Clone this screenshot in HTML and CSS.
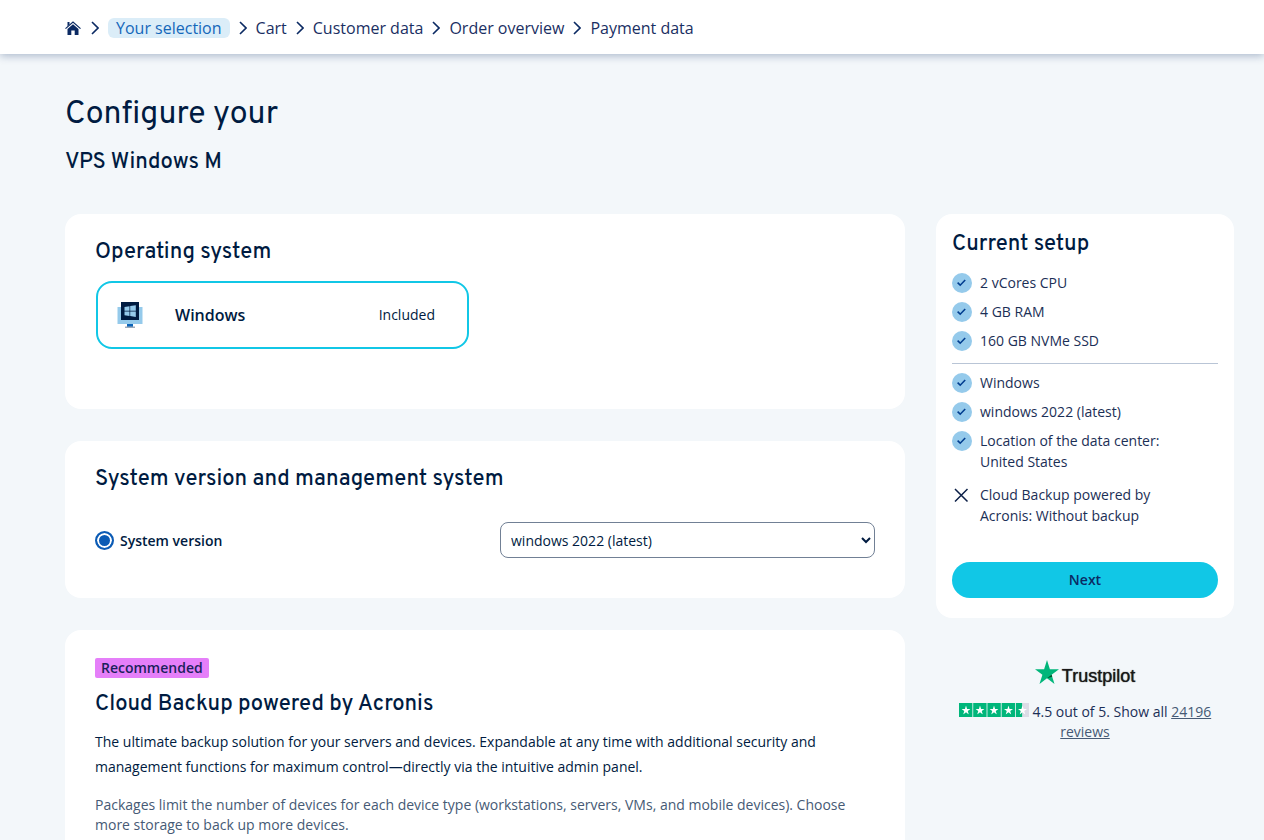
FILE: index.html
```html
<!doctype html>
<html lang="en">
<head>
<meta charset="utf-8">
<meta name="viewport" content="width=device-width, initial-scale=1">
<title>Configure your VPS Windows M</title>
<link rel="stylesheet" href="styles.css">
</head>

<body>

<!-- icons used more than once -->
<svg class="sprite" aria-hidden="true">
	<symbol id="chevron" viewBox="0 0 8 14"><path d="M1 1l6 6-6 6" fill="none" stroke="#0b2a63" stroke-width="1.6"/></symbol>
	<symbol id="check" viewBox="0 0 20 20"><circle cx="10" cy="10" r="10" fill="#95caeb"/><path d="M5.6 9.700l2.600 2.500 5-5.200" fill="none" stroke="#003d8f" stroke-width="1.6"/></symbol>
	<symbol id="star" viewBox="0 0 24 24"><path d="M12 0l2.9 9.2H24l-7.4 5.6 2.9 9.2-7.5-5.7L4.500 24l2.900-9.200L0 9.200h9.100z"/></symbol>
</svg>

<header class="topbar">
	<nav class="breadcrumb" aria-label="Order steps">
		<a class="home" href="#" aria-label="Home">
			<svg width="16" height="14" viewBox="0 0 16 14" fill="#0b2a63"><path d="M8 3.200l5.500 4.800v6H9.700V9.500H6.300V14H2.500V8z"/><path d="M.5 7.600L8 1l7.500 6.600" fill="none" stroke="#0b2a63" stroke-width="1.2"/><path d="M2.500 1h2v2.500l-2 1.800z"/></svg>
		</a>
		<svg class="chevron"><use href="#chevron"/></svg>
		<a class="current" href="#" aria-current="step">Your selection</a>
		<svg class="chevron"><use href="#chevron"/></svg>
		<a href="#">Cart</a>
		<svg class="chevron"><use href="#chevron"/></svg>
		<a href="#">Customer data</a>
		<svg class="chevron"><use href="#chevron"/></svg>
		<a href="#">Order overview</a>
		<svg class="chevron"><use href="#chevron"/></svg>
		<a href="#">Payment data</a>
	</nav>
</header>

<div class="page">
	<h1>Configure your</h1>
	<h2 class="product">VPS Windows M</h2>

	<div class="columns">
		<main class="options">
			<section class="card card-os">
				<h2>Operating system</h2>
				<button type="button" class="os">
					<svg width="26" height="26" viewBox="0 0 26 26">
						<path fill="#95caeb" d="M.5 5h25v17H.5z"/>
						<path fill="#0b64b8" d="M10 22h6v3h-6z"/>
						<path fill="#9aa9ba" d="M8 24.500h10V26H8z"/>
						<path fill="#001b41" d="M4 0h18v18H4z"/>
						<path fill="#95caeb" d="M7.500 5l5-.8v4.500h-5zM13.200 4.100l5.600-.8v5.400h-5.600zM7.500 9.400h5v4.600l-5-.8zM13.200 9.400h5.600v5.500l-5.600-.8z"/>
					</svg>
					<span class="os-name">Windows</span>
					<span class="os-price">Included</span>
				</button>
			</section>

			<section class="card card-version">
				<h2>System version and management system</h2>
				<div class="version">
					<label class="radio"><input type="radio" name="system" checked>System version</label>
					<select aria-label="System version">
						<option>windows 2022 (latest)</option>
					</select>
				</div>
			</section>

			<section class="card card-backup">
				<span class="badge">Recommended</span>
				<h2>Cloud Backup powered by Acronis</h2>
				<p class="lead">The ultimate backup solution for your servers and devices. Expandable at any time with additional security and management functions for maximum control—directly via the intuitive admin panel.</p>
				<p class="hint">Packages limit the number of devices for each device type (workstations, servers, VMs, and mobile devices). Choose more storage to back up more devices.</p>
			</section>
		</main>

		<aside>
			<section class="card setup">
				<h2>Current setup</h2>
				<ul>
					<li><svg><use href="#check"/></svg>2 vCores CPU</li>
					<li><svg><use href="#check"/></svg>4 GB RAM</li>
					<li><svg><use href="#check"/></svg>160 GB NVMe SSD</li>
				</ul>
				<hr>
				<ul>
					<li><svg><use href="#check"/></svg>Windows</li>
					<li><svg><use href="#check"/></svg>windows 2022 (latest)</li>
					<li><svg><use href="#check"/></svg>Location of the data center: United States</li>
					<li class="off"><svg viewBox="0 0 20 20"><path d="M3 4l12.500 12.500M15.500 4L3 16.500" fill="none" stroke="#0b1f47" stroke-width="1.500"/></svg>Cloud Backup powered by Acronis: Without backup</li>
				</ul>
				<button type="button" class="next">Next</button>
			</section>

			<div class="trust">
				<div class="trust-logo">
					<svg width="24" height="24" viewBox="0 0 24 24"><use href="#star" fill="#00b67a"/><path fill="#005128" d="M17.200 16.800l-.6-2-4.600 3.500z"/></svg>
					<span>Trustpilot</span>
				</div>
				<p>
					<svg class="stars" width="70" height="14" viewBox="0 0 70 14" role="img" aria-label="4.5 stars">
						<path fill="#00b67a" d="M0 0h13.400v14H0zM14.200 0h13.400v14H14.200zM28.400 0h13.400v14H28.400zM42.600 0h13.400v14H42.600zM56.800 0h6.600v14h-6.600z"/>
						<path fill="#dcdce6" d="M63.400 0H70v14h-6.600z"/>
						<g fill="#fff">
							<use href="#star" x="2.500" y="2.500" width="9" height="9"/>
							<use href="#star" x="16.500" y="2.500" width="9" height="9"/>
							<use href="#star" x="30.500" y="2.500" width="9" height="9"/>
							<use href="#star" x="45" y="2.500" width="9" height="9"/>
							<use href="#star" x="59" y="2.500" width="9" height="9"/>
						</g>
					</svg>
					4.5 out of 5. Show all <a href="#">24196 reviews</a>
				</p>
			</div>
		</aside>
	</div>
</div>

</body>
</html>
```
FILE: styles.css
```css
* { box-sizing: border-box; }

body {
	margin: 0;
	background: #f3f7fa;
	color: #001b41;
	font: 14px/21px "Open Sans", sans-serif;
}

h1, h2, p, ul { margin: 0; padding: 0; }

h1, h2 { font-family: Overpass, Roboto, sans-serif; }
h1 { font-size: 32px; font-weight: 400; line-height: 40px; }
h2 { font-size: 22px; font-weight: 500; line-height: 30px; }

.sprite { position: absolute; width: 0; height: 0; }

/* top bar */
.topbar {
	background: #fff;
	box-shadow: 0 2px 8px rgba(11,42,99,0.3);
	padding: 18px 65px 16px;
}

.breadcrumb {
	display: flex;
	align-items: center;
	gap: 9px;
	font-size: 16px;
	line-height: 20px;
}

.breadcrumb a { color: #1a2f63; text-decoration: none; }
.breadcrumb .home { display: flex; margin-right: 1px; }
.breadcrumb .current {
	background: #dbedf8;
	border-radius: 6px;
	color: #1467ba;
	padding: 0 8px;
}

.chevron { width: 8px; height: 14px; }

/* layout */
.page { padding: 41px 30px 30px 65px; }
.product { margin-top: 13px; }

.columns {
	display: grid;
	grid-template-columns: minmax(0, 1fr) 298px;
	gap: 31px;
	align-items: start;
	margin-top: 36px;
}

.options { display: grid; gap: 32px; }

.card {
	background: #fff;
	border-radius: 16px;
	padding: 24px 30px;
}

/* operating system */
.card-os { padding-bottom: 60px; }

.os {
	display: flex;
	align-items: center;
	width: 100%;
	max-width: 373px;
	height: 68px;
	margin: 13px 0 0 1px;
	padding: 0 32px 0 19px;
	background: #fff;
	border: 2px solid #11c7e6;
	border-radius: 16px;
	color: #001b41;
	font: inherit;
	line-height: 20px;
	cursor: pointer;
}

.os-name { margin-left: 32px; font-size: 16px; font-weight: 600; }
.os-price { margin-left: auto; }

/* system version */
.card-version { padding-bottom: 40px; }

.version {
	display: grid;
	grid-template-columns: 1fr 1fr;
	gap: 30px;
	align-items: center;
	margin-top: 27px;
}

.radio { display: flex; align-items: center; gap: 6px; font-weight: 600; }
.radio input {
	appearance: none;
	width: 19px;
	height: 19px;
	margin: 0;
	border: 2px solid #0b5bb5;
	border-radius: 50%;
}
.radio input:checked { background: #0b5bb5; box-shadow: inset 0 0 0 2px #fff; }

select {
	width: 100%;
	height: 36px;
	padding: 0 0 0 6px;
	background: #fff;
	border: 1px solid #718095;
	border-radius: 8px;
	color: #001b41;
	font: inherit;
}

/* cloud backup */
.card-backup { padding-top: 28px; }

.badge {
	display: block;
	width: fit-content;
	padding: 0 6px;
	background: #e57ff9;
	border-radius: 2px;
	color: #1b1f5c;
	font-weight: 600;
	line-height: 20px;
}

.card-backup h2 { margin-top: 12px; }
.lead { margin-top: 9px; line-height: 25px; }
.hint { margin-top: 16px; color: #465a75; line-height: 20px; }

/* current setup */
.setup { padding: 16px 16px 20px; }
.setup ul { display: grid; gap: 8px; padding-right: 30px; list-style: none; color: #1b2f56; }
.setup h2 { margin-bottom: 12px; }
.setup li { display: flex; gap: 8px; }
.setup li svg { flex: none; width: 20px; height: 20px; margin-top: 1px; }
.setup .off { margin-top: 4px; }
.setup hr { margin: 12px 0 8px; border: 0; border-top: 1px solid #b9c5d6; }

.next {
	width: 100%;
	height: 36px;
	margin-top: 36px;
	background: #11c7e6;
	border: 0;
	border-radius: 18px;
	color: #0b2a63;
	font: inherit;
	font-weight: 600;
	line-height: 20px;
	cursor: pointer;
}

/* trustpilot */
.trust { padding: 42px 16px 0; text-align: center; color: #1b2f56; }
.trust-logo { display: flex; justify-content: center; gap: 3px; }
.trust-logo span {
	padding-top: 6px;
	color: #191919;
	font: 18px/20px "Liberation Sans", sans-serif;
	text-shadow: 0 0 1px #191919;
}
.trust p { margin-top: 16px; line-height: 20px; }
.trust a { color: #465a75; }
```
